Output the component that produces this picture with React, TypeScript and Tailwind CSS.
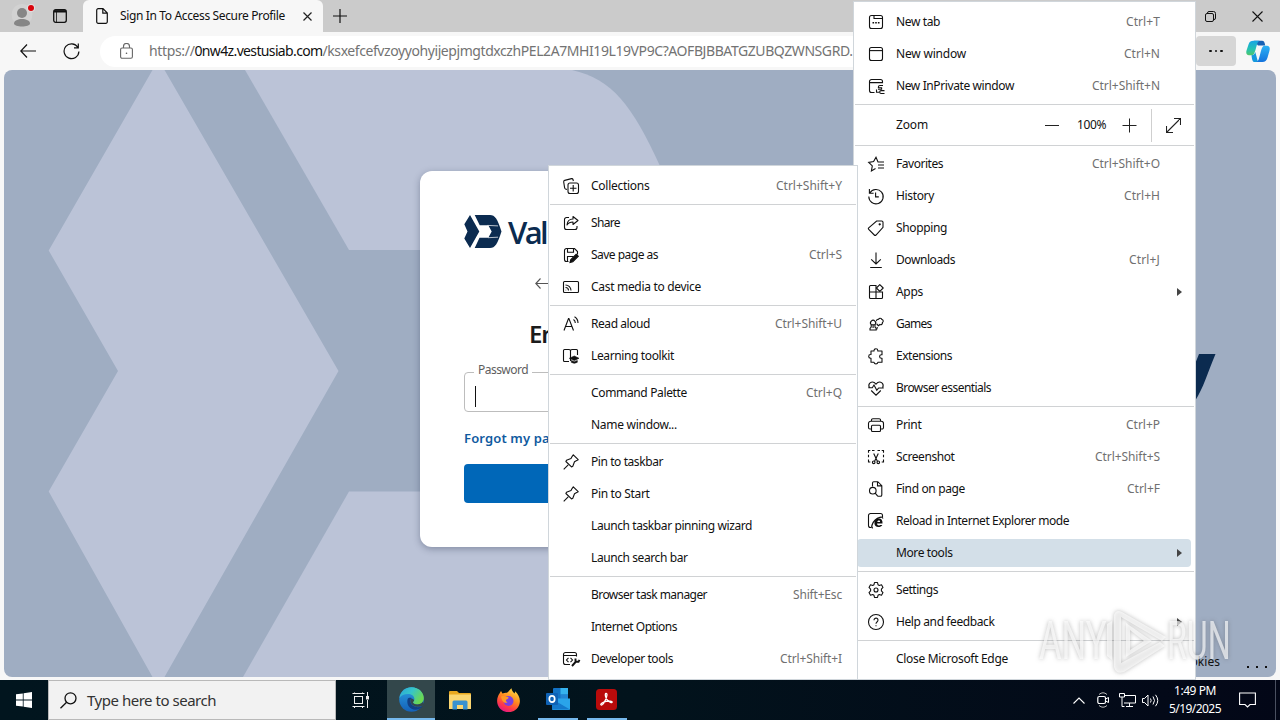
import React, { useLayoutEffect, useRef } from "react";

/** Single line of text whose tracking is adjusted so that it spans `w` pixels. */
function T({ w, className = "", children }: { w: number; className?: string; children: string }) {
  const ref = useRef<HTMLSpanElement>(null);
  useLayoutEffect(() => {
    const el = ref.current;
    if (!el) return;
    el.style.letterSpacing = "0px";
    const natural = el.getBoundingClientRect().width;
    el.style.letterSpacing = `${(w - natural) / children.length}px`;
  }, [w, children]);
  return (
    <span ref={ref} className={`inline-block shrink-0 whitespace-pre ${className}`}>
      {children}
    </span>
  );
}

const icons: Record<string, React.ReactNode> = {
  newTab: (
    <>
      <rect x="1.5" y="1.5" width="13" height="13" rx="2" />
      <path d="M6 1.5v3h8.5" />
      <path d="M4.5 8.7h1.6M7.2 8.7h1.6M9.9 8.7h1.6" strokeWidth="1.4" />
    </>
  ),
  window: (
    <>
      <rect x="1.5" y="1.5" width="13" height="13" rx="2" />
      <path d="M1.5 4.6h13" />
    </>
  ),
  inprivate: (
    <>
      <path d="M6.5 14.5h-3a2 2 0 0 1-2-2v-9a2 2 0 0 1 2-2h9a2 2 0 0 1 2 2v1.8M1.5 4.6h13" />
      <path d="M15 7.5h-3a1.6 1.6 0 0 0-1.6 1.6v.6h3.2v1.6H10M16.500 12.600h-3.400a1.400 1.400 0 0 0 0 2.900h3.400M8.500 11.500v2.700h2.600" />
    </>
  ),
  favorites: (
    <path d="M14.800 6H10L8 1.200 5.600 5.600.7 6.400l3.600 3.500-.9 5L7.500 12.600M10 9h6M10 12h6M11.500 6H16" />
  ),
  history: (
    <>
      <path d="M1.400 1v4.200h4.200M1.800 5A7.200 7.200 0 1 1 .8 8.600" />
      <path d="M7.600 4.500v4.400h3.200" />
    </>
  ),
  shopping: (
    <>
      <path d="M8.600 1h5.100c.8 0 1.300.5 1.300 1.300v5.100L8 15c-.5.500-1.200.500-1.700 0L.700 9.400c-.5-.5-.5-1.100 0-1.600z" />
      <circle cx="11.700" cy="4.300" r=".6" fill="currentColor" />
    </>
  ),
  downloads: <path d="M8 .5v11.300M3.200 7.300 8 12l4.800-4.700M2.200 15.500h11.600" />,
  apps: (
    <>
      <path d="M8 8V1.500H2.500a1 1 0 0 0-1 1V13.500a1 1 0 0 0 1 1h11a1 1 0 0 0 1-1V8zM1.500 8H8v6.500" />
      <path d="m11.800.600 3.400 3.400-3.400 3.400L8.400 4z" fill="#fff" strokeLinejoin="round" />
    </>
  ),
  games: (
    <>
      <path d="M2 14h6.200v-1.600L7 11V8.700a2.600 2.600 0 1 0-3.800 0V11L2 12.400zM3.200 8.700H7M5.100 9v3" />
      <path d="M8.600 5.200c-.3-1.300.8-2.300 2-1.900.5-1.500 2.900-1.400 3.300.2 1.500.3 1.800 2.300.5 3 .3 1.500-1 2.600-2.400 2L10.400 9.700 8.700 8M9.300 11l-.5 2.500" />
    </>
  ),
  extensions: (
    <path d="M6 3V2.600a1.900 1.900 0 0 1 3.800 0V3h4.200v3.700h-.6a1.800 1.800 0 0 0 0 3.600h.6V14.200H9.900v.2a2 2 0 0 1-3.900 0v-.2H3V10.300H2.600a1.900 1.900 0 0 1 0-3.800H3V3z" strokeLinejoin="round" />
  ),
  essentials: (
    <path d="M1.300 7.500C.5 5.600.8 3.900 2.100 2.900c1.900-1.400 4.300-.7 5.900 1.200 1.600-1.900 4-2.600 5.900-1.200 1.300 1 1.600 2.700.8 4.600M.3 7.800h4L6 5l2.800 5.200L10.700 8h5M3.200 10.500 8 15.200l4.800-4.700" />
  ),
  print: (
    <>
      <path d="M3.500 4.200V3a1.300 1.300 0 0 1 1.300-1.300h6.400A1.300 1.300 0 0 1 12.500 3v1.200M3.500 12H2a1.500 1.500 0 0 1-1.500-1.500V6.500a2.300 2.300 0 0 1 2.300-2.300h10.400a2.300 2.300 0 0 1 2.300 2.300v4a1.500 1.500 0 0 1-1.500 1.500h-1.500" />
      <rect x="3.500" y="8.200" width="9" height="6.300" rx="1" />
    </>
  ),
  screenshot: (
    <>
      <path d="M.5 3.800V1.500h1.800M4 1.500h2.500M9.500 1.500H12M13.700 1.500h1.800v2.300M.5 5.800v2.500M15.500 5.800v2.500M.5 10.500v2.500h1.800M15.500 10.500v2.500h-1.800" />
      <path d="m5.700 4.500 3.700 7.700M10.300 4.500l-3.700 7.700" />
      <circle cx="5.700" cy="13.300" r="1.300" />
      <circle cx="10.300" cy="13.300" r="1.300" />
    </>
  ),
  find: (
    <>
      <path d="M4.500 5.500V2A1.300 1.300 0 0 1 5.800.7h4l4 4V14a1.300 1.300 0 0 1-1.300 1.300h-3M9.500.9v4h4" />
      <circle cx="4.800" cy="9.700" r="3.300" />
      <path d="m7.200 12.200 2.500 3" />
    </>
  ),
  ie: (
    <>
      <path d="M3.500 14.500h-1a2 2 0 0 1-2-2v-10a2 2 0 0 1 2-2h10a2 2 0 0 1 2 2V4" />
      <path d="M14.300 11.900c-.8 1.400-2.200 2.200-3.900 2.200-2.400 0-4-1.600-4-3.900 0-2.600 1.800-4.600 4.300-4.600 2.700 0 4.100 2 3.800 4.900H9c0 2 2.200 2.400 3 1.400zM9.300 8.900h2.800c.1-1.700-2.300-1.900-2.800 0z" fill="currentColor" fillRule="evenodd" stroke="none" />
      <path d="M5 14.800c-2.500.3-.8-5 2-7.600 3-2.900 7.500-4.300 7.800-1.700" strokeWidth="1.300" />
    </>
  ),
  settings: (
    <>
      <circle cx="8" cy="8" r="2" />
      <path d="M6.500.5h3l.5 2.200 1.300.8 2.200-.7 1.500 2.600L13.400 7.100v1.800l1.600 1.700-1.500 2.600-2.200-.7-1.300.8-.5 2.200h-3L6 13.300l-1.300-.8-2.200.7L1 10.600l1.600-1.700V7.100L1 5.400l1.500-2.600 2.200.7L6 2.700z" strokeLinejoin="round" />
    </>
  ),
  help: (
    <>
      <circle cx="8" cy="8" r="7.500" />
      <path d="M6 6.200a2 2 0 1 1 3.200 1.500C8.400 8.300 8 8.700 8 9.700M8 11.200v1" />
    </>
  ),
  collections: (
    <>
      <path d="M4 11.500 2.500 11c-.6-.3-.8-.8-.9-1.400L.7 4c-.1-.8.3-1.400 1-1.600L8.500.6c.7-.1 1.300.2 1.500.9l.4 1.500" />
      <rect x="5" y="5" width="10.500" height="10.500" rx="2" />
      <path d="M10.200 7v6.500M7 10.200h6.500" />
    </>
  ),
  share: (
    <>
      <path d="M6 2.500H3.500a2 2 0 0 0-2 2v8a2 2 0 0 0 2 2h8.500a2 2 0 0 0 2-2v-1.500" />
      <path d="M10 1.500 15 5.500l-5 4V7c-3 0-4.600.8-6 3 .3-3.600 2.400-6 6-6z" strokeLinejoin="round" />
    </>
  ),
  save: (
    <>
      <path d="M5.500 14.500h-2a2 2 0 0 1-2-2v-9a2 2 0 0 1 2-2h8l3 3v3M4.500 1.500V5.300h6V1.500M4.500 14.500V9.500h6" />
      <path d="m7 15.500.7-2.800 5.500-5.500 2.100 2.100-5.500 5.500z" fill="currentColor" />
    </>
  ),
  cast: (
    <>
      <rect x=".5" y="2.500" width="15" height="11" rx="1" />
      <path d="M2.500 6a5.500 5.500 0 0 1 5.500 5.500M2.500 8.500a3 3 0 0 1 3 3" />
      <path d="M2.800 11.200h.3" strokeWidth="1.400" />
    </>
  ),
  read: <path d="M1 14.500 5.500 2.500h.4l4.600 12M2.700 10.500h6.100M10.500 3.500q1.800 1.200 1.800 3.500M11.500.7q3.500 2 3.500 6.300" />,
  learning: (
    <>
      <path d="M6 13.500H1.500A1 1 0 0 1 .5 12.500V2.500a1 1 0 0 1 1-1H6a1.500 1.500 0 0 1 1.500 1.500v10M7.500 3A1.500 1.500 0 0 1 9 1.500h4.500a1 1 0 0 1 1 1V7" />
      <path d="m6.300 10.300 5-2.300 4.700 2.300-4.700 2.200zM8.300 12.500l3 1.200 3-1.200v1.800q-3 2-6 0z" fill="currentColor" strokeWidth=".6" />
    </>
  ),
  pin: (
    <path d="M.7 15.300 5.200 10.800M10.300.8l4.900 4.900-1.500.9-2.200 1.200-1.700 4.500-1.300.6L2.900 7.500l.6-1.300 4.500-1.700 1.200-2.200z" strokeLinejoin="round" />
  ),
  dev: (
    <>
      <path d="M7 13.500H2.500a2 2 0 0 1-2-2v-8a2 2 0 0 1 2-2h9a2 2 0 0 1 2 2v2M.5 4.500h13M5.500 6.800 3.500 9l2 2.200M7.500 6.800 9.500 9l-2 2.200" />
      <path d="m9 15 4-4.500M12.500 7.500v3.300h3l1-2" strokeWidth="1.900" />
    </>
  ),
};

function Icon({ name }: { name: string }) {
  return (
    <svg width="16" height="16" viewBox="0 0 16 16" fill="none" stroke="currentColor" strokeWidth="1.1" className="shrink-0 overflow-visible">
      {icons[name]}
    </svg>
  );
}

type Row = { sep?: boolean; icon?: string; label?: string; w?: number; keys?: string; kw?: number; arrow?: boolean; on?: boolean };
const sep: Row = { sep: true };

const topRows: Row[] = [
  { icon: "newTab", label: "New tab", w: 44, keys: "Ctrl+T", kw: 34 },
  { icon: "window", label: "New window", w: 70, keys: "Ctrl+N", kw: 36 },
  { icon: "inprivate", label: "New InPrivate window", w: 118, keys: "Ctrl+Shift+N", kw: 68 },
  sep,
];

const mainRows: Row[] = [
  sep,
  { icon: "favorites", label: "Favorites", w: 47, keys: "Ctrl+Shift+O", kw: 68 },
  { icon: "history", label: "History", w: 38, keys: "Ctrl+H", kw: 36 },
  { icon: "shopping", label: "Shopping", w: 51 },
  { icon: "downloads", label: "Downloads", w: 59, keys: "Ctrl+J", kw: 31 },
  { icon: "apps", label: "Apps", w: 27, arrow: true },
  { icon: "games", label: "Games", w: 35.5 },
  { icon: "extensions", label: "Extensions", w: 56 },
  { icon: "essentials", label: "Browser essentials", w: 95 },
  sep,
  { icon: "print", label: "Print", w: 25.5, keys: "Ctrl+P", kw: 34 },
  { icon: "screenshot", label: "Screenshot", w: 58.5, keys: "Ctrl+Shift+S", kw: 65 },
  { icon: "find", label: "Find on page", w: 69, keys: "Ctrl+F", kw: 33 },
  { icon: "ie", label: "Reload in Internet Explorer mode", w: 173 },
  { label: "More tools", w: 56.5, arrow: true, on: true },
  sep,
  { icon: "settings", label: "Settings", w: 42 },
  { icon: "help", label: "Help and feedback", w: 98.5, arrow: true },
  sep,
  { label: "Close Microsoft Edge", w: 112 },
];

const toolRows: Row[] = [
  { icon: "collections", label: "Collections", w: 58.5, keys: "Ctrl+Shift+Y", kw: 66 },
  sep,
  { icon: "share", label: "Share", w: 29 },
  { icon: "save", label: "Save page as", w: 67, keys: "Ctrl+S", kw: 33 },
  { icon: "cast", label: "Cast media to device", w: 110 },
  sep,
  { icon: "read", label: "Read aloud", w: 59, keys: "Ctrl+Shift+U", kw: 67 },
  { icon: "learning", label: "Learning toolkit", w: 83 },
  sep,
  { label: "Command Palette", w: 96, keys: "Ctrl+Q", kw: 36 },
  { label: "Name window...", w: 86 },
  sep,
  { icon: "pin", label: "Pin to taskbar", w: 72 },
  { icon: "pin", label: "Pin to Start", w: 58.5 },
  { label: "Launch taskbar pinning wizard", w: 161 },
  { label: "Launch search bar", w: 96.5 },
  sep,
  { label: "Browser task manager", w: 116, keys: "Shift+Esc", kw: 49 },
  { label: "Internet Options", w: 86 },
  { icon: "dev", label: "Developer tools", w: 82, keys: "Ctrl+Shift+I", kw: 62 },
];

function Rows({ rows, pad }: { rows: Row[]; pad: string }) {
  return (
    <>
      {rows.map((r, i) =>
        r.sep ? (
          <div key={i} className="flex h-[5px] items-center px-px">
            <div className="h-px w-full bg-[#d0d2d4]" />
          </div>
        ) : (
          <div key={i} className={`relative flex h-8 items-center ${pad}`}>
            {r.on && <div className="absolute inset-y-[2px] left-[3px] right-[4px] rounded bg-[#d3dfe8]" />}
            <div className="relative mr-3 flex w-4 justify-center">{r.icon && <Icon name={r.icon} />}</div>
            <T w={r.w!} className="relative">{r.label!}</T>
            <div className="grow" />
            {r.keys && <T w={r.kw!} className="text-[#707070]">{r.keys}</T>}
            {r.arrow && (
              <svg width="5" height="8" viewBox="0 0 5 8" className="absolute right-[13px] text-[#444]">
                <path d="M0 0l5 4-5 4z" fill="currentColor" />
              </svg>
            )}
          </div>
        ),
      )}
    </>
  );
}

function MainMenu() {
  return (
    <div className="absolute left-[853px] top-px h-[679px] w-[343px] border border-[#d0d6db] bg-white pt-1 text-[12px] leading-4 text-[#111]">
      <Rows rows={topRows} pad="pl-[14px] pr-[35px]" />
      <div className="flex h-9 items-center pl-[42px]">
        <T w={32}>Zoom</T>
        <div className="ml-[117px] h-px w-[14px] bg-[#222]" />
        <div className="ml-[18px] flex w-[29px]">
          <T w={29}>100%</T>
        </div>
        <svg width="15" height="15" viewBox="0 0 15 15" className="ml-4" stroke="#222" fill="none">
          <path d="M7.500.5v14M.5 7.500h14" />
        </svg>
        <div className="ml-[14px] h-[33px] w-px bg-[#cfcfcf]" />
        <svg width="15" height="15" viewBox="0 0 15 15" className="ml-[14px]" stroke="#222" fill="none" strokeWidth="1.100">
          <path d="M.5 14.500l14-14M8 .5h6.500V7M.5 8v6.500H7" />
        </svg>
      </div>
      <Rows rows={mainRows} pad="pl-[14px] pr-[35px]" />
    </div>
  );
}

function ToolsMenu() {
  return (
    <div className="absolute left-[548px] top-[165px] h-[515px] w-[310px] border border-[#d0d6db] bg-white pt-1 text-[12px] leading-4 text-[#111]">
      <Rows rows={toolRows} pad="pl-[14px] pr-[15px]" />
    </div>
  );
}

function TabStrip() {
  return (
    <div className="flex h-8 bg-[#cbcbcb]">
      <div className="flex w-[83px] items-center">
        <div className="relative ml-[14px] h-5 w-[22px]">
          <svg width="22" height="22" viewBox="0 0 22 22" className="overflow-visible">
            <circle cx="8" cy="8.500" r="10.500" fill="#d2d2d2" />
            <circle cx="8" cy="7" r="5" fill="#868686" />
            <path d="M0 17.500c0-6 16-6 16 0 0 4-16 4-16 0z" fill="#868686" />
            <circle cx="17" cy="2" r="4" fill="#e3dede" />
            <circle cx="17" cy="2" r="3" fill="#d9040c" />
          </svg>
        </div>
        <svg width="14" height="14" viewBox="0 0 14 14" fill="none" stroke="#111" strokeWidth="1.300" className="ml-[17px]">
          <rect x=".7" y=".7" width="12.600" height="12.600" rx="2" />
          <path d="M1 2.300h12" strokeWidth="2.400" />
          <path d="M3.500 3v10" strokeWidth=".8" />
        </svg>
      </div>
      <div className="flex w-[240px] items-center rounded-t-md bg-[#f7f7f7] pl-[13px]">
        <svg width="12" height="16" viewBox="0 0 12 16" fill="none" stroke="#111" strokeWidth="1.200">
          <path d="M.7 2.200A1.500 1.500 0 0 1 2.200.7H7l4.300 4.300v8.800a1.500 1.500 0 0 1-1.500 1.500H2.200a1.500 1.500 0 0 1-1.500-1.500zM6.800.7v4.500h4.500" />
        </svg>
        <T w={165} className="ml-3 text-[12px] leading-4 text-[#111]">Sign In To Access Secure Profile</T>
        <svg width="9" height="9" viewBox="0 0 9 9" stroke="#222" strokeWidth="1.200" className="ml-[18px]">
          <path d="M.5.5l8 8M8.500.5l-8 8" />
        </svg>
      </div>
      <svg width="14" height="14" viewBox="0 0 14 14" stroke="#111" strokeWidth="1.200" className="ml-[10px] mt-[9px]">
        <path d="M7 0v14M0 7h14" />
      </svg>
      <div className="grow" />
      <svg width="11" height="11" viewBox="0 0 11 11" fill="none" stroke="#111" className="mr-9 mt-[11px]">
        <rect x=".5" y="2.500" width="8" height="8" rx="1.500" />
        <path d="M2.500 2.300V2A1.500 1.500 0 0 1 4 .5h4.500a2 2 0 0 1 2 2V7a1.500 1.500 0 0 1-1.800 1.500" />
      </svg>
      <svg width="11" height="11" viewBox="0 0 11 11" stroke="#111" strokeWidth="1.100" className="mr-[17px] mt-[11px]">
        <path d="M.5.5l10 10M10.500.5l-10 10" />
      </svg>
    </div>
  );
}

function Toolbar() {
  return (
    <div className="flex h-[38px] items-center bg-[#f7f7f7]">
      <svg width="16" height="14" viewBox="0 0 16 14" fill="none" stroke="#111" strokeWidth="1.200" className="ml-5">
        <path d="M7 .5.8 7 7 13.500M1 7h15" />
      </svg>
      <svg width="17" height="17" viewBox="0 0 17 17" fill="none" stroke="#111" strokeWidth="1.200" className="ml-[27px]">
        <path d="M14.800 4.300A7.400 7.400 0 1 0 15.900 8.500M15.300.5v4.300H11" />
      </svg>
      <div className="ml-5 flex h-[31px] w-[1094px] items-center rounded-full bg-white pl-5">
        <svg width="13" height="16" viewBox="0 0 13 16" fill="none" stroke="#666" strokeWidth="1.100">
          <rect x=".6" y="5" width="11.800" height="10.300" rx="1.500" />
          <path d="M3.500 5V3.500a3 3 0 0 1 6 0V5" />
          <circle cx="6.500" cy="10.200" r=".8" fill="#555" stroke="none" />
        </svg>
        <div className="ml-[16px] flex text-[14px] leading-5 text-[#737373]">
          <T w={45.5}>https://</T>
          <T w={128} className="text-[#111]">0nw4z.vestusiab.com</T>
          <T w={530}>/ksxefcefvzoyyohyijepjmgtdxczhPEL2A7MHI19L19VP9C?AOFBJBBATGZUBQZWNSGRD.</T>
        </div>
      </div>
      <div className="ml-[2px] flex h-[30px] w-10 items-center justify-center gap-[3px] rounded bg-[#d6d6d6]">
        <i className="size-[2.5px] rounded-full bg-[#111]" />
        <i className="size-[2.5px] rounded-full bg-[#111]" />
        <i className="size-[2.5px] rounded-full bg-[#111]" />
      </div>
      <svg width="24" height="23" viewBox="0 0 24 23" className="ml-[10px]">
        <defs>
          <linearGradient id="cpA" x1="0" y1="0" x2="0" y2="1">
            <stop offset="0" stopColor="#16a4e6" />
            <stop offset=".6" stopColor="#25c3b0" />
            <stop offset="1" stopColor="#4fc66b" />
          </linearGradient>
          <linearGradient id="cpB" x1="0" y1="0" x2="0" y2="1">
            <stop offset="0" stopColor="#2bb2f5" />
            <stop offset="1" stopColor="#1473dd" />
          </linearGradient>
        </defs>
        <path d="M8 .7h8c2 0 2.500 1.300 3.200 4.800H12z" fill="#1761b4" />
        <path d="M7.500.7h6c-2 1-2.300 3-3.300 6.500-1.300 4.500-2 8-4.500 8H3C.3 15.200-.2 12.800.6 10.200l2-6C3.500 1.500 5 .7 7.500.7z" fill="url(#cpA)" />
        <path d="M5.500 15.300c2 0 3-1 3.800-3.300L12 22H8.800c-2.200 0-2.700-1.500-3.300-6.700z" fill="#1599dc" />
        <path d="M16.500 22h-6c2-1 2.300-3 3.300-6.500 1.300-4.500 2-9.800 4.500-9.800H21c2.700 0 3.200 2.600 2.400 5.200l-2 7c-.9 2.700-2.400 4.100-4.900 4.100z" fill="url(#cpB)" />
      </svg>
    </div>
  );
}

function LoginCard() {
  return (
    <div className="absolute left-[416px] top-[101px] flex h-[376px] w-[440px] flex-col rounded-xl bg-white px-11 pt-11 shadow-[0_2px_7px_rgba(30,40,70,0.35)]">
      <div className="flex h-[34px] items-center">
        <svg width="38" height="34" viewBox="0 0 38 34" fill="#0b2b50">
          <path d="M6 0l9.300 16.500L6 33 .3 23.600l3.200-7.100L.3 9.200z" />
          <path d="M10.700 0H26c5 0 7.500 4 11.500 16.500C33.500 29 31 33 26 33H10.700l4.800-10.300h8.800l3.400-6.200-3.400-6.200h-8.600z" />
          <path d="M23.500 10.400 34 10.900M24 22.700 34 22.200" stroke="#fff" strokeWidth=".7" />
        </svg>
        <T w={73} className="ml-[6px] font-['Open_Sans',sans-serif] text-[31px] font-semibold leading-[32px] text-[#0b2b50]">Valley</T>
      </div>
      <svg width="14" height="11" viewBox="0 0 14 11" fill="none" stroke="#555" strokeWidth="1.100" className="ml-[71px] mt-[29px]">
        <path d="M5.500.5.8 5.500l4.700 5M1 5.500h13" />
      </svg>
      <div className="ml-[65px] mt-[28px] text-[24px] font-semibold leading-[34px] text-[#1b1b1b]">
        <T w={166}>Enter password</T>
      </div>
      <div className="relative mt-[21px] flex h-10 items-center rounded border border-[#bdbdbd] pl-[10px]">
        <div className="mt-2 h-[21px] w-px bg-[#111]" />
        <div className="absolute -top-[11px] left-[9px] flex h-4 items-center bg-white px-1 text-[12px] leading-4 text-[#5e5e5e]">
          <T w={50}>Password</T>
        </div>
      </div>
      <div className="mt-[17px] text-[13px] font-semibold leading-[18px] text-[#0f5aa0]">
        <T w={138}>Forgot my password?</T>
      </div>
      <div className="mt-[17px] h-[39px] rounded bg-[#0067b8]" />
    </div>
  );
}

function Page() {
  return (
    <div className="h-[610px] bg-[#f7f7f7] px-1">
      <div className="relative h-[607px] overflow-hidden rounded-lg bg-[#9fadc2]">
        <svg width="1272" height="607" viewBox="4 70 1272 607" className="block">
          <path d="M152.500 70h12L338.500 371 164.500 677h-12L48.700 491.500 118 371 48.700 250.500z" fill="#bbc3d7" />
          <path d="M245 70H572c40 9 60 35 88 96v84H349z" fill="#bbc3d7" />
          <path d="M349 491.500H700V677H243z" fill="#bbc3d7" />
          <path d="M1199 354h16.500c-8 19-12 34-20.500 47h-2v-32z" fill="#0b2b50" />
        </svg>
        <LoginCard />
        <div className="absolute bottom-[7px] right-[9px] flex items-end text-[12px] leading-4 text-[#111]">
          <T w={98} className="mr-[27px]">Privacy &amp; cookies</T>
          <div className="mb-[2px] flex gap-[7px]">
            <i className="size-[2px] bg-[#111]" />
            <i className="size-[2px] bg-[#111]" />
            <i className="size-[2px] bg-[#111]" />
          </div>
        </div>
      </div>
    </div>
  );
}

function EdgeLogo() {
  return (
    <svg width="25" height="25" viewBox="0 0 24 24">
      <defs>
        <linearGradient id="eTop" x1="0" y1="0" x2="1" y2=".5">
          <stop offset="0" stopColor="#2ba5d8" />
          <stop offset=".5" stopColor="#36c5ca" />
          <stop offset="1" stopColor="#6cd84f" />
        </linearGradient>
        <linearGradient id="eLeft" x1="0" y1="0" x2="0" y2="1">
          <stop offset="0" stopColor="#2b9fe0" />
          <stop offset="1" stopColor="#1460b8" />
        </linearGradient>
      </defs>
      <circle cx="12" cy="12" r="11.800" fill="url(#eLeft)" />
      <path d="M.4 10.500C1.500 4 6.500.2 12 .2c7 0 11.800 5 11.800 10.300 0 3.800-2.800 6.200-6.200 6.200-2.600 0-4.200-.9-4.200-2 0-.8 1.400-1.300 1.400-3.200C14.800 8.500 11.800 6.700 8.500 6.700 5 6.700 2 8 .4 10.500z" fill="url(#eTop)" />
      <path d="M8.300 11.500c-1.500 5.500 2.200 10.300 7.500 10.300 2.800 0 4.700-1 6.500-2.800.3-.3 0-.7-.4-.5-4.300 2-10 .5-11-4.500-.2-1.600.5-2.500 1.500-3.200-1.600-.8-3.600-.5-4.100.7z" fill="#123f84" />
      <path d="M13.400 14.700c0 1.100 1.600 2 4.200 2 1.900 0 4-.8 5.400-2.500L23.200 17.500c-4.300 3-11.300 1.500-12.300-3.500-.2-1.300.4-2.200 1.300-3 1.400.8 2.600 1.300 2.300 2.300-.3.700-1.100 1-1.100 1.400z" fill="#33474b" />
    </svg>
  );
}

function Taskbar() {
  return (
    <div className="flex h-10 items-stretch bg-linear-to-r from-[#01151e] via-[#02131c] to-[#030717]">
      <div className="flex w-12 items-center justify-center">
        <svg width="16" height="16" viewBox="0 0 16 16" fill="#fff">
          <path d="M0 2.300 6.800 1.400v6.200H0zM7.600 1.300 16 .1v7.500H7.600zM0 8.400h6.800v6.200L0 13.700zM7.600 8.400H16v7.500l-8.400-1.200z" />
        </svg>
      </div>
      <div className="flex w-[288px] items-center border border-[#b9b9b9] bg-[#f2f2f2] pl-[11px]">
        <svg width="17" height="17" viewBox="0 0 17 17" fill="none" stroke="#111" strokeWidth="1.300">
          <circle cx="10.500" cy="6.300" r="5.500" />
          <path d="M6.600 10.200.5 16.300" />
        </svg>
        <T w={129} className="ml-[10px] text-[15px] leading-5 text-[#333]">Type here to search</T>
      </div>
      <div className="flex w-[51px] items-center pl-4">
        <svg width="17" height="16" viewBox="0 0 17 16" fill="none" stroke="#eee">
          <rect x="2.500" y="4.500" width="8" height="7" />
          <path d="M.5 1.500h12M.5 14.500h12M2.500.5v1.500M10.500.5v1.500M2.500 14v2M10.500 14v2M15.500 0v4M15.500 8v8" />
          <rect x="14.500" y="4.500" width="2" height="2.500" fill="#eee" />
        </svg>
      </div>
      <div className="flex w-12 items-center justify-center border-b-2 border-[#76b9ed] bg-[#33474b]">
        <EdgeLogo />
      </div>
      <div className="flex w-[49px] items-center justify-center">
        <svg width="22" height="19" viewBox="0 0 22 19">
          <path d="M0 1a1 1 0 0 1 1-1h7l2 2h11a1 1 0 0 1 1 1v15H0z" fill="#e9a81f" />
          <path d="M0 3.500h22V18H0z" fill="#fbd671" />
          <path d="M3.500 18.500V11a1.500 1.500 0 0 1 1.500-1.500h12a1.500 1.500 0 0 1 1.500 1.500v7.500H14V14H8v4.500z" fill="#3a92cf" />
        </svg>
      </div>
      <div className="flex w-[49px] items-center justify-center">
        <svg width="23" height="24" viewBox="0 0 23 24">
          <defs>
            <linearGradient id="ff" x1=".8" y1="0" x2=".3" y2="1">
              <stop offset="0" stopColor="#ffe14a" />
              <stop offset=".45" stopColor="#ff8a1e" />
              <stop offset=".75" stopColor="#ff3b46" />
              <stop offset="1" stopColor="#e31587" />
            </linearGradient>
          </defs>
          <path d="M2.500 5.500 4 3l1.500 2.500C7 4.700 8.500 4.500 10 4.700 11.500 3.800 12.500 2 14.500.3c.3 2.500 1.500 4 3.300 5.200l.2-2.300c3 2.500 4.900 6 4.900 9.800A11.400 11.200 0 0 1 .1 13c0-3 1-5.500 2.400-7.500z" fill="url(#ff)" />
          <circle cx="11.500" cy="13" r="5" fill="#7a3fe0" />
          <path d="M4 8.500c2.500-1.500 4 .3 7 .5 1 .1.500 1.700-1 2.300-1.600.6-1.500 2.200.5 3.200-3 1-5.500-.5-6.500-6z" fill="#ff9a24" />
        </svg>
      </div>
      <div className="flex w-[49px] justify-center">
        <div className="flex w-10 items-center justify-center border-b-2 border-[#76b9ed]">
          <svg width="24" height="22" viewBox="0 0 24 22">
            <rect x="7" y="0" width="15" height="13" rx="1" fill="#1272c4" />
            <rect x="14.500" y="0" width="7.500" height="6.500" fill="#35b2ee" />
            <rect x="14.500" y="6.500" width="7.500" height="6.500" fill="#2285d5" />
            <path d="M6 10.500h18V21a1 1 0 0 1-1 1H7a1 1 0 0 1-1-1z" fill="#2aa4ea" />
            <path d="M6 11l18 10.500H7A1 1 0 0 1 6 21z" fill="#1479cc" />
            <rect x="0" y="5" width="12" height="12" rx="1" fill="#0f62b5" />
            <ellipse cx="6" cy="11" rx="2.700" ry="3.100" fill="none" stroke="#fff" strokeWidth="1.700" />
          </svg>
        </div>
      </div>
      <div className="flex w-[49px] justify-center">
        <div className="flex w-10 items-center justify-center border-b-2 border-[#76b9ed]">
          <svg width="21" height="21" viewBox="0 0 21 21" fill="none">
            <rect width="21" height="21" rx="3.500" fill="#b90b0b" />
            <path d="M10 4.500c1.800 0 .8 3.200-.5 6.200-1.200 2.700-3 5.600-4.300 5.300-1.500-.5 1.200-2.900 5-3.600 3-.6 6-.4 6 .7 0 1.200-2.800.3-4.700-1.900C9.500 9 8.600 4.500 10 4.500z" stroke="#fff" strokeWidth="1.300" />
          </svg>
        </div>
      </div>
      <div className="grow" />
      <div className="flex items-center">
        <svg width="12" height="7" viewBox="0 0 12 7" fill="none" stroke="#fff" strokeWidth="1.100">
          <path d="M.5 6.500 6 1l5.500 5.500" />
        </svg>
        <svg width="12" height="16" viewBox="0 0 12 16" fill="none" stroke="#fff" className="ml-3">
          <path d="M2 2.500Q6-1 10 2.500M2 13.500q4 3.500 8 0" stroke="#bbb" />
          <rect x=".8" y="4.500" width="7.700" height="7" rx="1.500" strokeWidth="1.200" />
          <path d="M8.500 7l3-1.500v5L8.500 9" />
        </svg>
        <svg width="17" height="14" viewBox="0 0 17 14" fill="none" stroke="#fff" className="ml-[10px]">
          <path d="M5 2.500h11.500v7.500H5M10.500 10v3.500M7 13.500h7" />
          <path d="M.5.5h5v3.500h-5zM3 4v9.500h2.500" />
        </svg>
        <svg width="17" height="13" viewBox="0 0 17 13" fill="none" stroke="#fff" className="ml-[6px]">
          <path d="M.5 4.500h2L6 1v11L2.500 8.500h-2zM8.500 4.500q1.300 2 0 4M11 2.500q3 4 0 8M13.500.8q4.500 5.700 0 11.400" />
        </svg>
        <div className="ml-[9px] flex w-[54px] flex-col items-center text-[12px] leading-[18px] text-white">
          <T w={42}>1:49 PM</T>
          <T w={52}>5/19/2025</T>
        </div>
        <svg width="17" height="16" viewBox="0 0 17 16" fill="none" stroke="#fff" strokeWidth="1.100" className="ml-[17px]">
          <path d="M.6 1h15.800v11.500H11L8.500 15 6 12.500H.6z" />
        </svg>
        <div className="ml-[19px] mr-1 h-10 w-px bg-[#4a5060]" />
      </div>
    </div>
  );
}

function Watermark() {
  return (
    <svg width="204" height="76" viewBox="0 0 204 76" className="absolute left-[1035px] top-[604px] drop-shadow-[0_0_2px_rgba(60,60,60,0.5)]">
      <g fill="#fff" fillOpacity=".66" fontFamily="Roboto, sans-serif" fontSize="53">
        <g transform="translate(4 55) scale(.65 1)">
          <text textLength="104" lengthAdjust="spacingAndGlyphs">ANY</text>
        </g>
        <g transform="translate(132 55) scale(.65 1)">
          <text textLength="98" lengthAdjust="spacingAndGlyphs">RUN</text>
        </g>
        <path d="M72 20l5-3v39l-5-4zM79 11q2-6 8-3l44 25-4 4L86 13v46l39-21 5 4-41 26q-8 3-10-5z" />
        <path d="M91 19v34l26-16zm4 7 14 11-14 9z" />
      </g>
    </svg>
  );
}

export default function App() {
  return (
    <div className="relative h-[720px] w-[1280px] overflow-hidden bg-[#f7f7f7] font-['Noto_Sans','Open_Sans',sans-serif]">
      <TabStrip />
      <Toolbar />
      <Page />
      <Taskbar />
      <MainMenu />
      <ToolsMenu />
      <Watermark />
    </div>
  );
}
